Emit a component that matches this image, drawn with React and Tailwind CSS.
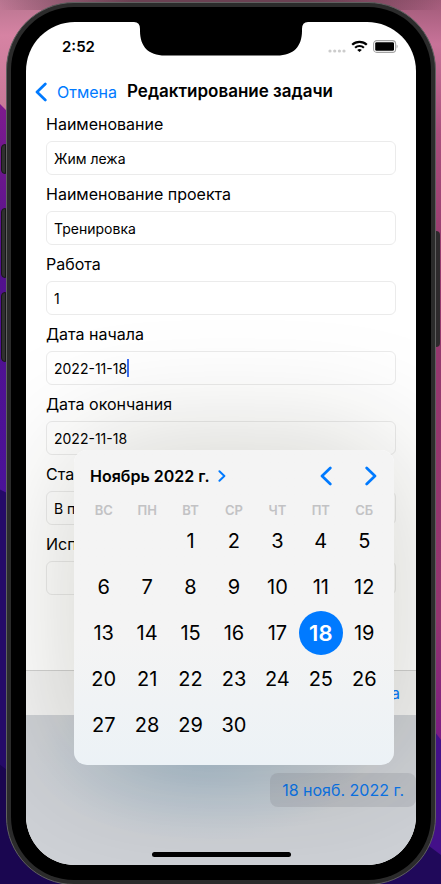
import React from "react";

const FIELDS = [
  { id: "name", label: "Наименование", value: "Жим лежа" },
  { id: "project", label: "Наименование проекта", value: "Тренировка" },
  { id: "work", label: "Работа", value: "1" },
  { id: "start", label: "Дата начала", value: "2022-11-18", active: true },
  { id: "end", label: "Дата окончания", value: "2022-11-18" },
  { id: "status", label: "Статус", value: "В процессе" },
  { id: "assignee", label: "Исполнитель", value: "" },
];

const WEEKDAYS = ["ВС", "ПН", "ВТ", "СР", "ЧТ", "ПТ", "СБ"];
const WEEKS = [
  [null, null, 1, 2, 3, 4, 5],
  [6, 7, 8, 9, 10, 11, 12],
  [13, 14, 15, 16, 17, 18, 19],
  [20, 21, 22, 23, 24, 25, 26],
  [27, 28, 29, 30, null, null, null],
];

function Chevron({ direction, className, weight = 2.7 }) {
  return (
    <svg viewBox="0 0 12 20" className={className} fill="none" stroke="currentColor" strokeWidth={weight} strokeLinecap="round" strokeLinejoin="round" aria-hidden="true">
      <path d={direction === "left" ? "M10.3 2 L2 10 L10.3 18" : "M1.7 2 L10 10 L1.7 18"} />
    </svg>
  );
}

function Wallpaper() {
  return (
    <svg className="absolute inset-0 h-full w-full" viewBox="0 0 441 884" preserveAspectRatio="none" aria-hidden="true">
      <defs>
        <linearGradient id="wpLeft" x1="0" y1="0" x2="0" y2="1">
          <stop offset="0" stopColor="#b87590" />
          <stop offset="0.04" stopColor="#d683a3" />
          <stop offset="0.12" stopColor="#c87898" />
        </linearGradient>
        <linearGradient id="wpRight" x1="0" y1="0" x2="0" y2="1">
          <stop offset="0" stopColor="#a05a78" />
          <stop offset="0.05" stopColor="#c87399" />
          <stop offset="0.15" stopColor="#a94f7d" />
          <stop offset="0.3" stopColor="#96396e" />
          <stop offset="0.7" stopColor="#93356f" />
          <stop offset="0.83" stopColor="#7c1d83" />
        </linearGradient>
        <linearGradient id="wpPurple" x1="0" y1="0" x2="0" y2="1">
          <stop offset="0" stopColor="#7e1b8e" />
          <stop offset="0.4" stopColor="#53118c" />
          <stop offset="1" stopColor="#4a1299" />
        </linearGradient>
        <linearGradient id="wpTop" x1="0" y1="0" x2="1" y2="0">
          <stop offset="0" stopColor="#5a3445" stopOpacity="0" />
          <stop offset="0.3" stopColor="#6a4152" />
          <stop offset="0.7" stopColor="#6a4152" />
          <stop offset="1" stopColor="#5a3445" stopOpacity="0" />
        </linearGradient>
      </defs>
      <rect width="221" height="884" fill="url(#wpLeft)" />
      <rect x="220" width="221" height="884" fill="url(#wpRight)" />
      <rect width="441" height="10" fill="url(#wpTop)" />
      <path d="M0 104 L14 118 V500 H0 Z" fill="url(#wpPurple)" />
      <path d="M0 489 L14 496 V884 H0 Z" fill="#250a68" />
      <path d="M0 764 L90 830 V884 H0 Z" fill="#1a0650" />
      <path d="M430 725 L441 739 V884 H360 V800 Z" fill="#431089" />
      <path d="M425 842 L441 854 V884 H340 Z" fill="#20095a" />
    </svg>
  );
}

function StatusBar() {
  return (
    <div className="flex h-[49px] items-center justify-between pl-9 pr-[18px]">
      <span className="text-[15px] font-semibold leading-5">2:52</span>
      <div className="flex items-center gap-1">
        <svg width="20" height="14" viewBox="0 0 20 14" fill="#cccccc" aria-hidden="true">
          <circle cx="3" cy="11" r="1.6" />
          <circle cx="7.7" cy="11" r="1.6" />
          <circle cx="12.4" cy="11" r="1.6" />
          <circle cx="17" cy="11" r="1.6" />
        </svg>
        <svg width="17" height="13" viewBox="0 0 17 13" fill="none" stroke="#000" strokeWidth="2.2" aria-hidden="true">
          <path d="M1.2 4.8 C5.2 0.8 11.8 0.8 15.8 4.8" />
          <path d="M4.1 7.8 C6.6 5.4 10.4 5.4 12.9 7.8" />
          <path d="M8.5 12 L6.2 9.9 C7.5 8.8 9.5 8.8 10.8 9.9 Z" fill="#000" stroke="none" />
        </svg>
        <svg width="26" height="13" viewBox="0 0 26 13" aria-hidden="true">
          <rect x="1.6" y="0.6" width="22" height="11.8" rx="3.2" fill="#fff" stroke="#a3a3a3" strokeWidth="1.1" />
          <rect x="3.2" y="2.2" width="18.8" height="8.6" rx="1.4" fill="#000" />
          <path d="M24.6 4.6 C26 5.2 26 7.8 24.6 8.4 Z" fill="#a3a3a3" />
        </svg>
      </div>
    </div>
  );
}

function Field({ id, label, value, active }) {
  return (
    <div>
      <label htmlFor={id} className="flex h-9 items-center pt-0.5 text-base">
        {label}
      </label>
      <div className="relative">
        <input
          id={id}
          type="text"
          defaultValue={value}
          className="block h-[34px] w-full rounded-md border border-[#ebebeb] bg-white px-[7px] text-sm outline-none"
        />
        {active && <span className="absolute left-[81px] top-2 h-[18px] w-0.5 bg-[#3f6ff0]" />}
      </div>
    </div>
  );
}

function Calendar() {
  return (
    <section
      aria-label="Календарь"
      className="absolute left-12 right-[22px] top-[428px] h-[315px] rounded-[13px] bg-linear-to-b from-[#f4f4f4] from-60% to-[#ecf2f6] px-2 shadow-[0_0_130px_rgba(30,30,10,0.22)]"
    >
      <div className="flex h-[52px] items-center pl-2 pr-[9px]">
        <button type="button" className="flex items-center gap-2 text-base font-semibold">
          Ноябрь 2022 г.
          <Chevron direction="right" weight={3.2} className="h-3 w-2 text-[#007aff]" />
        </button>
        <div className="ml-auto flex items-center gap-[33px] text-[#007aff]">
          <button type="button" aria-label="Предыдущий месяц">
            <Chevron direction="left" className="h-5 w-3" />
          </button>
          <button type="button" aria-label="Следующий месяц">
            <Chevron direction="right" className="h-5 w-3" />
          </button>
        </div>
      </div>
      <table className="w-full table-fixed border-collapse text-center">
        <thead>
          <tr className="h-4">
            {WEEKDAYS.map((day) => (
              <th key={day} scope="col" className="p-0 text-[13px] font-semibold leading-4 text-[#c2c2c4]">
                {day}
              </th>
            ))}
          </tr>
        </thead>
        <tbody>
          {WEEKS.map((week, row) => (
            <tr key={row} className="h-[46px]">
              {week.map((day, column) => (
                <td key={column} className="p-0">
                  {day && (
                    <button
                      type="button"
                      aria-pressed={day === 18}
                      className={
                        day === 18
                          ? "-mx-1 size-11 rounded-full bg-[#007aff] text-[22px] font-semibold leading-none text-white"
                          : "-mx-1 size-11 text-xl leading-none text-black"
                      }
                    >
                      {day}
                    </button>
                  )}
                </td>
              ))}
            </tr>
          ))}
        </tbody>
      </table>
    </section>
  );
}

function DatePanel() {
  return (
    <div className="flex h-[150px] flex-col bg-[#ced1d6] bg-[radial-gradient(ellipse_at_45%_30%,rgba(130,175,210,0.4),transparent_55%)] pb-2">
      <button
        type="button"
        className="ml-auto mt-[58px] h-[34px] rounded-lg bg-[#767680]/20 px-3 text-base text-[#0a74ea]"
      >
        18 нояб. 2022 г.
      </button>
      <div className="mx-auto mt-auto h-[5px] w-[139px] rounded-full bg-black" />
    </div>
  );
}

export default function App() {
  return (
    <div className="relative overflow-hidden font-['Inter','Liberation_Sans',sans-serif] text-black">
      <Wallpaper />
      <div className="relative ml-1.5 mr-[5px] mt-0.5">
        <div className="absolute -left-[5px] top-[142px] h-[30px] w-[5px] rounded-l-sm border border-[#171717] bg-[#303030]" />
        <div className="absolute -left-[5px] top-[206px] h-[70px] w-[5px] rounded-l-sm border border-[#171717] bg-[#303030]" />
        <div className="absolute -left-[5px] top-[290px] h-[70px] w-[5px] rounded-l-sm border border-[#171717] bg-[#303030]" />
        <div className="absolute -right-1 top-[229px] h-[116px] w-1 rounded-r-sm bg-[#2d2a2c]" />
        <div className="rounded-[68px] border border-[#606060] bg-[#2b2b2b] p-1">
          <div className="rounded-[63px] bg-black p-[15px]">
            <main className="relative overflow-hidden rounded-[49px] bg-white">
              <svg className="absolute left-1/2 top-0 -translate-x-1/2" width="174" height="34" viewBox="0 0 174 34" aria-hidden="true">
                <path d="M0 0 Q6 0 6 7 V9 C6 24 14 33.5 31 33.5 H143 C160 33.5 168 24 168 9 V7 Q168 0 174 0 Z" fill="#000" />
              </svg>
              <StatusBar />
              <header className="mt-1 flex h-[34px] items-center gap-2.5 pl-[9px] text-base">
                <button type="button" className="flex items-center gap-2.5 text-[#007aff]">
                  <Chevron direction="left" className="h-5 w-3" />
                  Отмена
                </button>
                <h1 className="text-[17px] font-semibold">Редактирование задачи</h1>
              </header>
              <form className="-mt-1 h-[565px] px-5">
                {FIELDS.map((field) => (
                  <Field key={field.id} {...field} />
                ))}
              </form>
              <div className="flex h-[45px] items-center justify-end border-t border-[#d2d2d2] bg-[#f3f3f3] pr-4">
                <button type="button" className="text-base text-[#007aff]">
                  Дата
                </button>
              </div>
              <DatePanel />
              <Calendar />
            </main>
          </div>
        </div>
      </div>
    </div>
  );
}
